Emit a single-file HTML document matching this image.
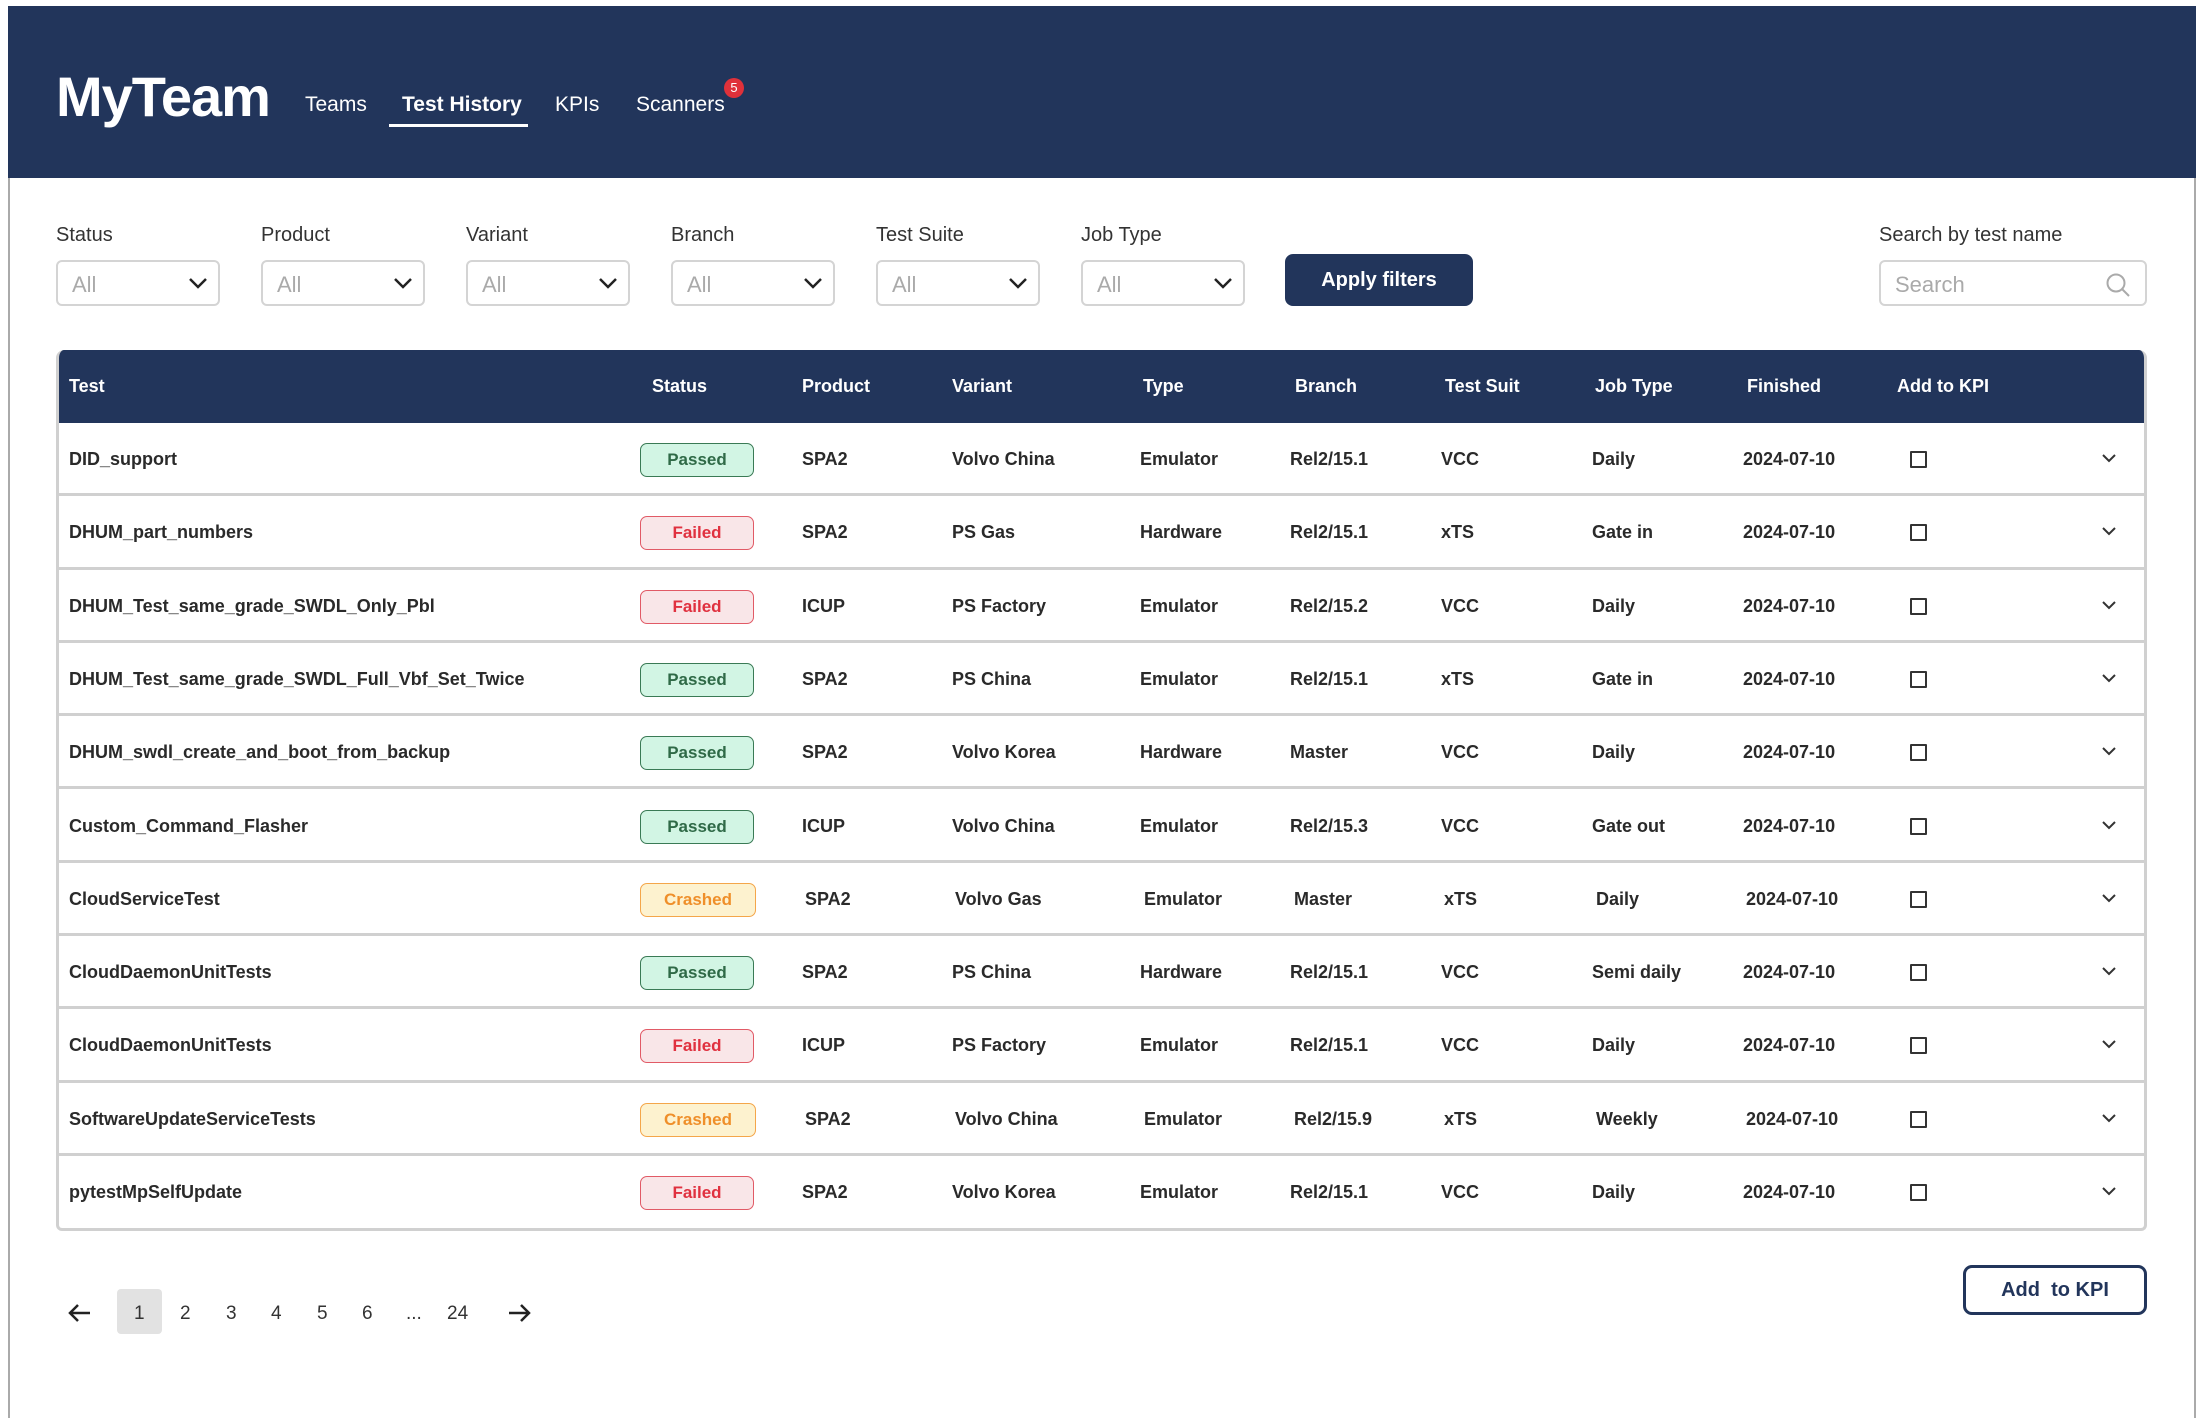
<!DOCTYPE html>
<html><head><meta charset="utf-8"><style>
*{box-sizing:border-box;margin:0;padding:0}
body{width:2202px;height:1426px;background:#fff;font-family:"Liberation Sans",sans-serif;color:#222;position:relative;overflow:hidden}
.frame{position:absolute;left:8px;top:6px;width:2188px;height:1412px;border-left:2px solid #aaa;border-right:2px solid #aaa}
.hdr{position:absolute;left:8px;top:6px;width:2188px;height:172px;background:#22355b}
.logo{position:absolute;left:56px;top:64px;font-size:56px;font-weight:bold;color:#fff;letter-spacing:-1px}
.nav{position:absolute;top:93px;font-size:21px;color:#fff}
.ul{position:absolute;left:389px;top:124px;width:139px;height:3px;background:#fff}
.badge{position:absolute;left:724px;top:78px;width:20px;height:20px;border-radius:50%;background:#e0313a;color:#fff;font-size:13px;text-align:center;line-height:20px}
.lbl{position:absolute;top:224px;font-size:20px;color:#333}
.sel{position:absolute;top:260px;width:164px;height:46px;border:2px solid #d4d4d4;border-radius:6px;font-size:22px;color:#aaa;padding:10px 0 0 14px}
.sel svg{position:absolute;right:10px;top:14px}
.btn{position:absolute;left:1285px;top:254px;width:188px;height:52px;background:#22355b;border-radius:8px;color:#fff;font-size:20px;font-weight:bold;text-align:center;line-height:52px}
.search{position:absolute;left:1879px;top:260px;width:268px;height:46px;border:2px solid #d4d4d4;border-radius:6px;font-size:22px;color:#aaa;padding:10px 0 0 14px}
.tbl{position:absolute;left:56px;top:350px;width:2091px;height:881px;border:3px solid #d0d0d0;border-top:0;border-radius:8px 8px 6px 6px;overflow:hidden}
.th{position:absolute;left:-3px;top:0;width:2094px;height:73px;background:#22355b;color:#fff;font-weight:bold;font-size:18px}
.th span{position:absolute;top:26px}
.row{position:absolute;left:0;width:2094px;height:73.3px;border-bottom:3px solid #d0d0d0;font-size:18px;font-weight:bold;color:#2a2a2a}
.row:last-child{border-bottom:0}
.row span{position:absolute;top:26px}
.b{position:absolute;top:20px;left:584px;width:114px;height:34px;border-radius:7px;border:1.5px solid;font-size:17px;text-align:center;line-height:31px;font-weight:bold}
.P{background:#d2f5e4;border-color:#3a7a55;color:#2f6a47}
.F{background:#f9e6e8;border-color:#e15a66;color:#e0313f}
.C{background:#fdf2cf;border-color:#f4a64a;color:#ef8f2a;width:116px}
.cb{position:absolute;left:1854px;top:28px;width:17px;height:17px;border:2px solid #333;border-radius:1px}
.ch{position:absolute;left:2046px;top:30px}
.pg{position:absolute;top:1303px;font-size:19px;color:#333}
.kpi{position:absolute;left:1963px;top:1265px;width:184px;height:50px;border:3px solid #22355b;border-radius:9px;color:#22355b;font-size:20px;font-weight:bold;text-align:center;line-height:44px}
</style></head><body>
<div class="frame"></div>
<div class="hdr"></div>
<div class="logo">MyTeam</div>
<div class="nav" style="left:305px">Teams</div>
<div class="nav" style="left:402px;font-weight:bold">Test History</div>
<div class="nav" style="left:555px">KPIs</div>
<div class="nav" style="left:636px">Scanners</div>
<div class="ul"></div>
<div class="badge">5</div>

<div class="lbl" style="left:56px">Status</div>
<div class="lbl" style="left:261px">Product</div>
<div class="lbl" style="left:466px">Variant</div>
<div class="lbl" style="left:671px">Branch</div>
<div class="lbl" style="left:876px">Test Suite</div>
<div class="lbl" style="left:1081px">Job Type</div>
<div class="lbl" style="left:1879px">Search by test name</div>

<div class="sel" style="left:56px">All<svg width="20" height="14" viewBox="0 0 20 14"><path d="M2 3l8 8 8-8" fill="none" stroke="#222" stroke-width="2.5"/></svg></div>
<div class="sel" style="left:261px">All<svg width="20" height="14" viewBox="0 0 20 14"><path d="M2 3l8 8 8-8" fill="none" stroke="#222" stroke-width="2.5"/></svg></div>
<div class="sel" style="left:466px">All<svg width="20" height="14" viewBox="0 0 20 14"><path d="M2 3l8 8 8-8" fill="none" stroke="#222" stroke-width="2.5"/></svg></div>
<div class="sel" style="left:671px">All<svg width="20" height="14" viewBox="0 0 20 14"><path d="M2 3l8 8 8-8" fill="none" stroke="#222" stroke-width="2.5"/></svg></div>
<div class="sel" style="left:876px">All<svg width="20" height="14" viewBox="0 0 20 14"><path d="M2 3l8 8 8-8" fill="none" stroke="#222" stroke-width="2.5"/></svg></div>
<div class="sel" style="left:1081px">All<svg width="20" height="14" viewBox="0 0 20 14"><path d="M2 3l8 8 8-8" fill="none" stroke="#222" stroke-width="2.5"/></svg></div>
<div class="btn">Apply filters</div>
<div class="search">Search<svg style="position:absolute;right:14px;top:10px" width="26" height="26" viewBox="0 0 26 26"><circle cx="11" cy="11" r="8.5" fill="none" stroke="#aaa" stroke-width="2"/><path d="M17 17l7 7" stroke="#aaa" stroke-width="2"/></svg></div>

<div class="tbl">
<div class="th"><span style="left:13px">Test</span><span style="left:596px">Status</span><span style="left:746px">Product</span><span style="left:896px">Variant</span><span style="left:1087px">Type</span><span style="left:1239px">Branch</span><span style="left:1389px">Test Suit</span><span style="left:1539px">Job Type</span><span style="left:1691px">Finished</span><span style="left:1841px">Add to KPI</span></div>
<div style="position:absolute;left:-3px;top:73px;width:2094px;height:808px">
<div class="row" style="top:0"><span style="left:13px">DID_support</span><div class="b P">Passed</div><span style="left:746px">SPA2</span><span style="left:896px">Volvo China</span><span style="left:1084px">Emulator</span><span style="left:1234px">Rel2/15.1</span><span style="left:1385px">VCC</span><span style="left:1536px">Daily</span><span style="left:1687px">2024-07-10</span><div class="cb"></div><svg class="ch" width="14" height="10" viewBox="0 0 14 10"><path d="M1 2l6 6 6-6" fill="none" stroke="#333" stroke-width="2"/></svg></div>
<div class="row" style="top:73.3px"><span style="left:13px">DHUM_part_numbers</span><div class="b F">Failed</div><span style="left:746px">SPA2</span><span style="left:896px">PS Gas</span><span style="left:1084px">Hardware</span><span style="left:1234px">Rel2/15.1</span><span style="left:1385px">xTS</span><span style="left:1536px">Gate in</span><span style="left:1687px">2024-07-10</span><div class="cb"></div><svg class="ch" width="14" height="10" viewBox="0 0 14 10"><path d="M1 2l6 6 6-6" fill="none" stroke="#333" stroke-width="2"/></svg></div>
<div class="row" style="top:146.6px"><span style="left:13px">DHUM_Test_same_grade_SWDL_Only_Pbl</span><div class="b F">Failed</div><span style="left:746px">ICUP</span><span style="left:896px">PS Factory</span><span style="left:1084px">Emulator</span><span style="left:1234px">Rel2/15.2</span><span style="left:1385px">VCC</span><span style="left:1536px">Daily</span><span style="left:1687px">2024-07-10</span><div class="cb"></div><svg class="ch" width="14" height="10" viewBox="0 0 14 10"><path d="M1 2l6 6 6-6" fill="none" stroke="#333" stroke-width="2"/></svg></div>
<div class="row" style="top:219.9px"><span style="left:13px">DHUM_Test_same_grade_SWDL_Full_Vbf_Set_Twice</span><div class="b P">Passed</div><span style="left:746px">SPA2</span><span style="left:896px">PS China</span><span style="left:1084px">Emulator</span><span style="left:1234px">Rel2/15.1</span><span style="left:1385px">xTS</span><span style="left:1536px">Gate in</span><span style="left:1687px">2024-07-10</span><div class="cb"></div><svg class="ch" width="14" height="10" viewBox="0 0 14 10"><path d="M1 2l6 6 6-6" fill="none" stroke="#333" stroke-width="2"/></svg></div>
<div class="row" style="top:293.2px"><span style="left:13px">DHUM_swdl_create_and_boot_from_backup</span><div class="b P">Passed</div><span style="left:746px">SPA2</span><span style="left:896px">Volvo Korea</span><span style="left:1084px">Hardware</span><span style="left:1234px">Master</span><span style="left:1385px">VCC</span><span style="left:1536px">Daily</span><span style="left:1687px">2024-07-10</span><div class="cb"></div><svg class="ch" width="14" height="10" viewBox="0 0 14 10"><path d="M1 2l6 6 6-6" fill="none" stroke="#333" stroke-width="2"/></svg></div>
<div class="row" style="top:366.5px"><span style="left:13px">Custom_Command_Flasher</span><div class="b P">Passed</div><span style="left:746px">ICUP</span><span style="left:896px">Volvo China</span><span style="left:1084px">Emulator</span><span style="left:1234px">Rel2/15.3</span><span style="left:1385px">VCC</span><span style="left:1536px">Gate out</span><span style="left:1687px">2024-07-10</span><div class="cb"></div><svg class="ch" width="14" height="10" viewBox="0 0 14 10"><path d="M1 2l6 6 6-6" fill="none" stroke="#333" stroke-width="2"/></svg></div>
<div class="row" style="top:439.8px"><span style="left:13px">CloudServiceTest</span><div class="b C">Crashed</div><span style="left:749px">SPA2</span><span style="left:899px">Volvo Gas</span><span style="left:1088px">Emulator</span><span style="left:1238px">Master</span><span style="left:1388px">xTS</span><span style="left:1540px">Daily</span><span style="left:1690px">2024-07-10</span><div class="cb"></div><svg class="ch" width="14" height="10" viewBox="0 0 14 10"><path d="M1 2l6 6 6-6" fill="none" stroke="#333" stroke-width="2"/></svg></div>
<div class="row" style="top:513.1px"><span style="left:13px">CloudDaemonUnitTests</span><div class="b P">Passed</div><span style="left:746px">SPA2</span><span style="left:896px">PS China</span><span style="left:1084px">Hardware</span><span style="left:1234px">Rel2/15.1</span><span style="left:1385px">VCC</span><span style="left:1536px">Semi daily</span><span style="left:1687px">2024-07-10</span><div class="cb"></div><svg class="ch" width="14" height="10" viewBox="0 0 14 10"><path d="M1 2l6 6 6-6" fill="none" stroke="#333" stroke-width="2"/></svg></div>
<div class="row" style="top:586.4px"><span style="left:13px">CloudDaemonUnitTests</span><div class="b F">Failed</div><span style="left:746px">ICUP</span><span style="left:896px">PS Factory</span><span style="left:1084px">Emulator</span><span style="left:1234px">Rel2/15.1</span><span style="left:1385px">VCC</span><span style="left:1536px">Daily</span><span style="left:1687px">2024-07-10</span><div class="cb"></div><svg class="ch" width="14" height="10" viewBox="0 0 14 10"><path d="M1 2l6 6 6-6" fill="none" stroke="#333" stroke-width="2"/></svg></div>
<div class="row" style="top:659.7px"><span style="left:13px">SoftwareUpdateServiceTests</span><div class="b C">Crashed</div><span style="left:749px">SPA2</span><span style="left:899px">Volvo China</span><span style="left:1088px">Emulator</span><span style="left:1238px">Rel2/15.9</span><span style="left:1388px">xTS</span><span style="left:1540px">Weekly</span><span style="left:1690px">2024-07-10</span><div class="cb"></div><svg class="ch" width="14" height="10" viewBox="0 0 14 10"><path d="M1 2l6 6 6-6" fill="none" stroke="#333" stroke-width="2"/></svg></div>
<div class="row" style="top:733px"><span style="left:13px">pytestMpSelfUpdate</span><div class="b F">Failed</div><span style="left:746px">SPA2</span><span style="left:896px">Volvo Korea</span><span style="left:1084px">Emulator</span><span style="left:1234px">Rel2/15.1</span><span style="left:1385px">VCC</span><span style="left:1536px">Daily</span><span style="left:1687px">2024-07-10</span><div class="cb"></div><svg class="ch" width="14" height="10" viewBox="0 0 14 10"><path d="M1 2l6 6 6-6" fill="none" stroke="#333" stroke-width="2"/></svg></div>
</div>
</div>

<svg style="position:absolute;left:68px;top:1303px" width="24" height="20" viewBox="0 0 24 20"><path d="M22 10H3M10 2L2 10l8 8" fill="none" stroke="#222" stroke-width="2.5"/></svg>
<div style="position:absolute;left:117px;top:1289px;width:45px;height:45px;background:#e2e2e2;border-radius:4px"></div>
<div class="pg" style="left:134px">1</div>
<div class="pg" style="left:180px">2</div>
<div class="pg" style="left:226px">3</div>
<div class="pg" style="left:271px">4</div>
<div class="pg" style="left:317px">5</div>
<div class="pg" style="left:362px">6</div>
<div class="pg" style="left:406px">...</div>
<div class="pg" style="left:447px">24</div>
<svg style="position:absolute;left:507px;top:1303px" width="24" height="20" viewBox="0 0 24 20"><path d="M2 10h19M14 2l8 8-8 8" fill="none" stroke="#222" stroke-width="2.5"/></svg>
<div class="kpi">Add&nbsp; to KPI</div>
</body></html>
